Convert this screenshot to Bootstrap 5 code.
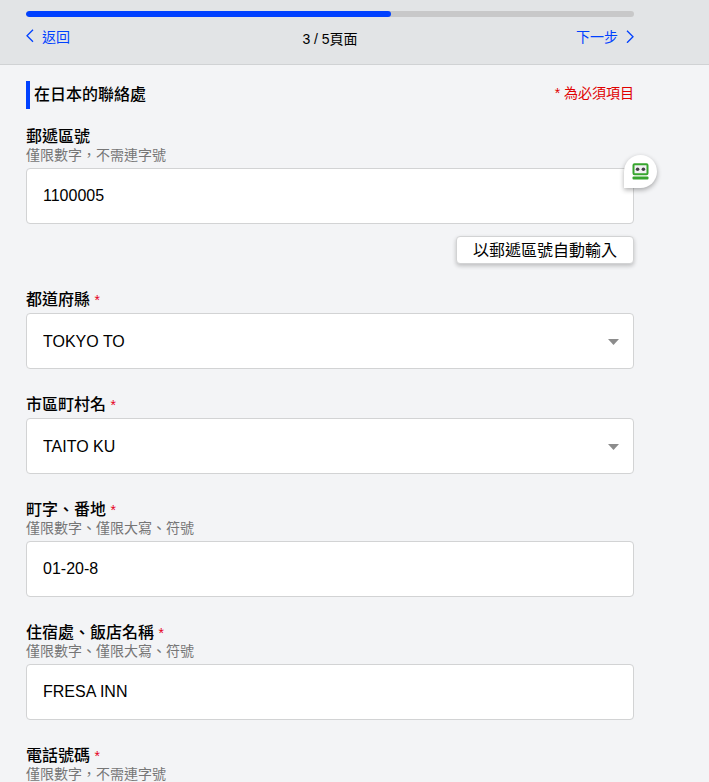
<!DOCTYPE html>
<html lang="zh-Hant">
<head>
<meta charset="utf-8">
<meta name="viewport" content="width=device-width, initial-scale=1">
<title>在日本的聯絡處</title>
<link href="https://cdn.jsdelivr.net/npm/bootstrap@5.3.0/dist/css/bootstrap.min.css" rel="stylesheet">
<style>
  body { font-family: "Liberation Sans", "Noto Sans CJK TC", sans-serif; font-size: 16px; line-height: 20px; color: #000; background: #f3f4f6; }
  .page-pad { padding-left: 26px; padding-right: 75px; }
  .step-header { background: #e2e4e6; border-bottom: 1px solid #d0d2d4; padding-top: 11px; padding-bottom: 15px; }
  .step-progress { height: 6px; border-radius: 3px; background: #c8c8c9; }
  .step-progress .progress-bar { width: 60%; border-radius: 3px; background: #0041ff; }
  .step-nav { font-size: 14px; margin-top: 8px; height: 24px; }
  .step-link { color: #0041ff; line-height: 24px; }
  .step-count { line-height: 28px; }
  .form-area { padding-top: 16px; }
  .section-title { border-left: 4px solid #0041ff; padding-left: 4px; font-size: 16px; font-weight: 500; line-height: 28px; }
  .required-note { color: #e00000; font-size: 14px; line-height: 24px; }
  .section-head { margin-bottom: 17px; }
  .field { margin-bottom: 25px; }
  .field-label { font-weight: 500; line-height: 22px; height: 20px; }
  .req { color: #e6001a; font-size: 14px; font-weight: 400; line-height: 20px; }
  .field-help { color: #767676; font-size: 14px; line-height: 18px; }
  .field-box { height: 56px; margin-top: 4px; padding: 0 16px; font-size: 16px; color: #000; background-color: #fff; border: 1px solid #d2d3d4; border-radius: 4px; }
  .field-select { background-image: none; padding-top: 2px; }
  .select-caret { right: 15px; top: 26px; width: 11px; height: 6px; pointer-events: none; }
  .fill-btn { height: 28px; margin-top: 12px; padding: 1px 16px 0; font-size: 16px; line-height: 26px; color: #000; background: #fff; border: 1px solid #d2d3d4; border-radius: 4px; box-shadow: 0 2px 4px rgba(0,0,0,.22); }
  .helper-badge { right: -23px; top: -9px; width: 33px; height: 33px; background: #fff; border-radius: 50% 50% 50% 0; box-shadow: 0 2px 5px rgba(0,0,0,.32); }
</style>
</head>
<body>
<header class="step-header page-pad">
  <div class="progress step-progress" role="progressbar" aria-label="3 / 5" aria-valuenow="60" aria-valuemin="0" aria-valuemax="100">
    <div class="progress-bar"></div>
  </div>
  <nav class="step-nav row g-0">
    <div class="col"><a href="#" class="step-link text-decoration-none d-inline-flex gap-2"><svg width="8" height="14" viewBox="0 0 8 14" class="mt-1" fill="none" stroke="currentColor" stroke-width="1.3" aria-hidden="true"><path d="M7 .8 1 6.8l6 6"/></svg>返回</a></div>
    <div class="col-auto step-count">3 / 5頁面</div>
    <div class="col text-end"><a href="#" class="step-link text-decoration-none d-inline-flex gap-2">下一步<svg width="8" height="14" viewBox="0 0 8 14" class="mt-1" fill="none" stroke="currentColor" stroke-width="1.3" aria-hidden="true"><path d="m1 1.8 6 6-6 6"/></svg></a></div>
  </nav>
</header>
<main class="form-area page-pad">
  <div class="section-head d-flex justify-content-between align-items-start">
    <h1 class="section-title mb-0">在日本的聯絡處</h1>
    <div class="required-note">* 為必須項目</div>
  </div>
  <form>
    <div class="field d-flex flex-column">
      <label class="field-label" for="zip">郵遞區號</label>
      <div class="field-help" id="zip-help">僅限數字，不需連字號</div>
      <div class="position-relative">
        <input class="form-control field-box" id="zip" type="text" value="1100005" aria-describedby="zip-help">
        <button type="button" class="helper-badge position-absolute border-0 p-0 d-flex align-items-center justify-content-center" aria-label="自動填寫">
          <svg width="17" height="17" viewBox="0 0 17 17" aria-hidden="true">
            <rect x="1.5" y="1.3" width="14" height="10" rx="1" fill="#f2f2f4" stroke="#37a52e" stroke-width="2"/>
            <circle cx="5.6" cy="6.3" r="1.8" fill="#454149"/><circle cx="11.4" cy="6.3" r="1.8" fill="#454149"/>
            <rect x=".5" y="13.4" width="16" height="3" rx="1" fill="#37a52e"/>
          </svg>
        </button>
      </div>
      <button type="button" class="btn fill-btn align-self-end">以郵遞區號自動輸入</button>
    </div>
    <div class="field">
      <label class="field-label d-block" for="pref">都道府縣 <span class="req">*</span></label>
      <div class="position-relative">
        <select class="form-select field-box field-select" id="pref"><option>TOKYO TO</option></select>
        <svg class="select-caret position-absolute" viewBox="0 0 11 6" aria-hidden="true"><path d="M0 0h11L5.500 6z" fill="#8c8c8c"/></svg>
      </div>
    </div>
    <div class="field">
      <label class="field-label d-block" for="city">市區町村名 <span class="req">*</span></label>
      <div class="position-relative">
        <select class="form-select field-box field-select" id="city"><option>TAITO KU</option></select>
        <svg class="select-caret position-absolute" viewBox="0 0 11 6" aria-hidden="true"><path d="M0 0h11L5.500 6z" fill="#8c8c8c"/></svg>
      </div>
    </div>
    <div class="field">
      <label class="field-label d-block" for="street">町字、番地 <span class="req">*</span></label>
      <div class="field-help" id="street-help">僅限數字、僅限大寫、符號</div>
      <input class="form-control field-box" id="street" type="text" value="01-20-8" aria-describedby="street-help">
    </div>
    <div class="field">
      <label class="field-label d-block" for="hotel">住宿處、飯店名稱 <span class="req">*</span></label>
      <div class="field-help" id="hotel-help">僅限數字、僅限大寫、符號</div>
      <input class="form-control field-box" id="hotel" type="text" value="FRESA INN" aria-describedby="hotel-help">
    </div>
    <div class="field">
      <label class="field-label d-block" for="phone">電話號碼 <span class="req">*</span></label>
      <div class="field-help" id="phone-help">僅限數字，不需連字號</div>
      <input class="form-control field-box" id="phone" type="tel" aria-describedby="phone-help">
    </div>
  </form>
</main>
<script src="https://cdn.jsdelivr.net/npm/bootstrap@5.3.0/dist/js/bootstrap.bundle.min.js"></script>
</body>
</html>
